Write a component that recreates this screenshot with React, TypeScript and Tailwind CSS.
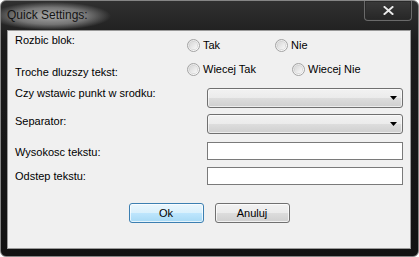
import React from 'react';

const font = { fontFamily: '"Liberation Sans", Arial, sans-serif' };

function Radio({ label, className }: { label: string; className?: string }) {
    return (
        <span className={`flex items-center gap-[3px] ${className ?? ''}`}>
            <span className="flex h-[13px] w-[13px] shrink-0 items-center justify-center rounded-full border border-[#a3a3a3] bg-[linear-gradient(135deg,#e2e2e2,#ffffff)]">
                <span className="h-[7px] w-[7px] rounded-full bg-[linear-gradient(135deg,#d8d8d8,#f8f8f8)] shadow-[0_0_0_1px_rgba(190,190,190,0.5)]" />
            </span>
            <span className="leading-[13px]">{label}</span>
        </span>
    );
}

function Combo() {
    return (
        <div className="flex h-[20px] w-[196px] items-center justify-end rounded-[3px] border border-[#707070] bg-[linear-gradient(to_bottom,#f2f2f2,#ebebeb_50%,#dddddd_50%,#cfcfcf)] pr-[5px] shadow-[inset_0_0_0_1px_rgba(255,255,255,0.6)]">
            <svg width="7" height="4" viewBox="0 0 7 4">
                <path d="M0 0h7L3.5 4z" fill="#000" />
            </svg>
        </div>
    );
}

function TextBox() {
    return <div className="h-[18px] w-[196px] border border-[#7a7a7a] bg-white" />;
}

function App() {
    return (
        <div
            className="flex h-[257px] w-[419px] flex-col overflow-hidden rounded-[6px] border border-[#858585] bg-[linear-gradient(to_bottom,#303030,#1c1c1c_40px,#121212)] text-[11px] text-black"
            style={font}
        >
            {/* Title bar */}
            <div className="relative flex h-[29px] shrink-0 items-start justify-between pl-[6px] pr-[6px]">
                <div className="absolute left-[-10px] top-[1px] h-[28px] w-[120px] bg-[radial-gradient(closest-side,rgba(175,175,175,0.95),rgba(150,150,150,0.7)_60%,transparent)]" />
                <span className="relative mt-[7px] text-[12px] leading-[15px] text-[#141414]">Quick Settings:</span>
                <div className="relative flex h-[20px] w-[48px] items-center justify-center rounded-b-[4px] border-x border-b border-[#6a6a6a] bg-[linear-gradient(to_bottom,#3a3a3a,#262626)] shadow-[inset_0_0_0_1px_#2a2a2a]">
                    <svg width="11" height="9" viewBox="0 0 11 9">
                        <path d="M1.5 1L9.5 8M9.5 1L1.5 8" stroke="#2a2a2a" strokeWidth="3.6" strokeLinecap="square" />
                        <path d="M1.5 1L9.5 8M9.5 1L1.5 8" stroke="#e8e8e8" strokeWidth="2" strokeLinecap="square" />
                    </svg>
                </div>
            </div>

            {/* Client area */}
            <div className="ml-[6px] mr-[7px] flex h-[219px] flex-col border border-[#9a9a9a] bg-[#f0f0f0] pl-[7px]">
                <div className="flex h-[27px] items-start">
                    <div className="mt-[3px] w-[172px] leading-[13px]">Rozbic blok:</div>
                    <div className="mt-[8px] flex">
                        <Radio label="Tak" className="w-[88px]" />
                        <Radio label="Nie" />
                    </div>
                </div>
                <div className="flex h-[26px] items-start">
                    <div className="mt-[8px] w-[172px] leading-[13px]">Troche dluzszy tekst:</div>
                    <div className="mt-[5px] flex">
                        <Radio label="Wiecej Tak" className="w-[105px]" />
                        <Radio label="Wiecej Nie" />
                    </div>
                </div>
                <div className="flex h-[28px] items-start">
                    <div className="mt-[3px] w-[192px] leading-[13px]">Czy wstawic punkt w srodku:</div>
                    <div className="mt-[4px]">
                        <Combo />
                    </div>
                </div>
                <div className="flex h-[27px] items-start">
                    <div className="mt-[3px] w-[192px] leading-[13px]">Separator:</div>
                    <div className="mt-[2px]">
                        <Combo />
                    </div>
                </div>
                <div className="flex h-[25px] items-start">
                    <div className="mt-[7px] w-[192px] leading-[13px]">Wysokosc tekstu:</div>
                    <div className="mt-[3px]">
                        <TextBox />
                    </div>
                </div>
                <div className="flex h-[24px] items-start">
                    <div className="mt-[6px] w-[192px] leading-[13px]">Odstep tekstu:</div>
                    <div className="mt-[3px]">
                        <TextBox />
                    </div>
                </div>
                <div className="mt-[15px] flex justify-center gap-[11px] pr-[7px]">
                    <button className="flex h-[20px] w-[75px] items-center justify-center rounded-[3px] border border-[#3c7fb1] bg-[linear-gradient(to_bottom,#eaf6fd,#d9f0fc_50%,#bee6fd_50%,#a7d9f5)] shadow-[inset_0_0_0_1px_rgba(255,255,255,0.7)]">
                        Ok
                    </button>
                    <button className="flex h-[20px] w-[75px] items-center justify-center rounded-[3px] border border-[#707070] bg-[linear-gradient(to_bottom,#f2f2f2,#ebebeb_50%,#dddddd_50%,#cfcfcf)] shadow-[inset_0_0_0_1px_rgba(255,255,255,0.7)]">
                        Anuluj
                    </button>
                </div>
            </div>
        </div>
    );
}

export default App;
